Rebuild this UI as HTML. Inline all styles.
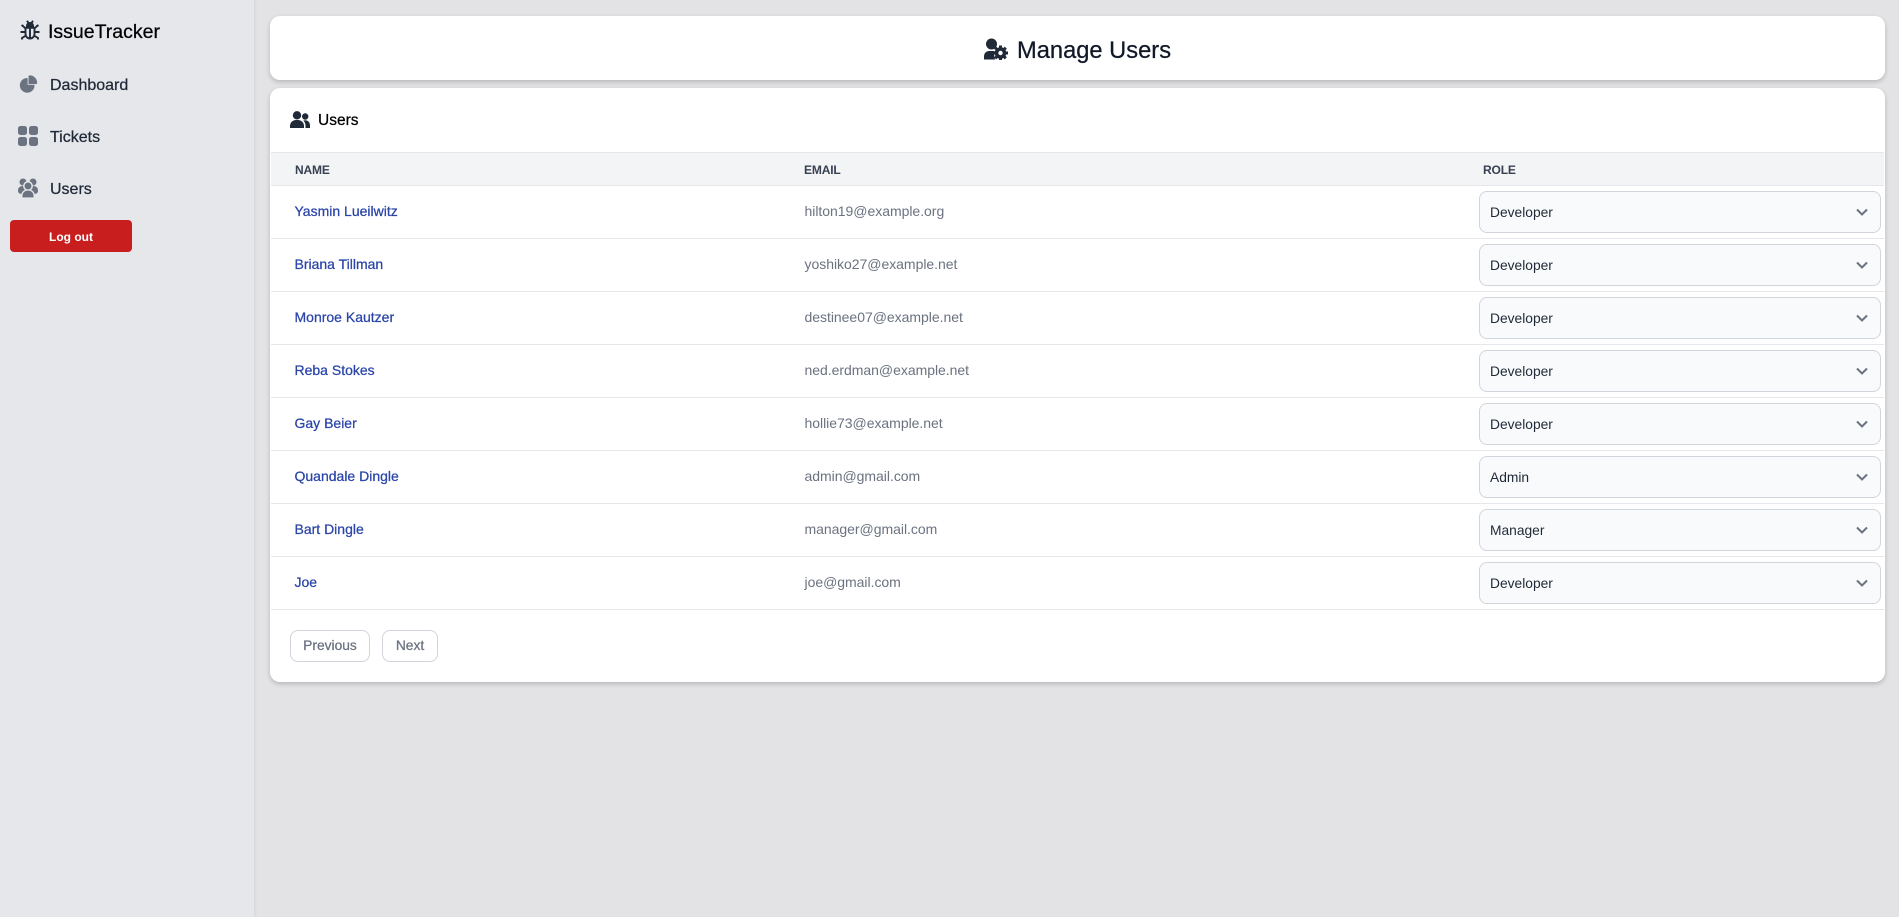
<!DOCTYPE html>
<html><head><meta charset="utf-8"><title>Manage Users</title>
<style>
*{box-sizing:border-box}
html,body{margin:0;padding:0;width:1899px;height:917px;overflow:hidden;background:#e3e3e5;font-family:"Liberation Sans",sans-serif;color:#111827}
.a{position:absolute}
.t{position:absolute;white-space:nowrap;line-height:20px}
#side{left:0;top:0;width:254px;height:917px;background:#e5e7eb;box-shadow:1px 0 3px rgba(0,0,0,.07)}
.card{position:absolute;left:270px;width:1615px;background:#fff;border-radius:10px;box-shadow:0 2px 5px rgba(0,0,0,.2)}
.line{position:absolute;left:271px;width:1613px;height:1px;background:#e5e7eb}
.sel{position:absolute;left:1479px;width:402px;height:42px;background:#f9fafb;border:1px solid #d1d5db;border-radius:8px}
.sel span{position:absolute;left:10px;top:11px;font-size:13.8px;line-height:20px;color:#1f2937}
.sel svg{position:absolute;right:12px;top:14px}
.n{left:294.500px;font-size:14px;color:#2a44a8;-webkit-text-stroke:.25px #2a44a8}
.e{left:804.500px;font-size:14px;letter-spacing:-.03px;color:#6b7280}
.h{font-size:12px;font-weight:700;color:#374151;top:160px;letter-spacing:-.15px}
.m{left:50px;font-size:16px;color:#1f2937;-webkit-text-stroke:.25px #1f2937}
.b{position:absolute;top:630px;height:32px;background:#fff;border:1px solid #d1d5db;border-radius:8px;font-size:13.800px;color:#6b7280;text-align:center;line-height:30px;-webkit-text-stroke:.25px #6b7280}
</style></head><body>
<div class="a" id="side"></div>
<svg class="a" style="left:20px;top:20px" width="20" height="20" viewBox="0 0 20 20" fill="none" stroke="#1f2937" stroke-width="1.9"><path fill="#1f2937" stroke="none" d="M6 6a4 4 0 0 1 8 0v1H6z"/><path d="M5.500 7.800h9v6.200a4.500 4.500 0 0 1-9 0zM10 7.500V18.500M7 .8l1.500 2.200M13 .8l-1.500 2.200M5.500 8.500 2.500 5.500 1.500 6M14.500 8.500 17.500 5.500 18.500 6M5.500 12H.5M14.500 12H19.500M6 15.500l-4 2.500v1.500M14 15.500l4 2.500v1.500"/></svg>
<div class="t" style="left:48px;top:21.500px;font-size:19.500px;color:#000;-webkit-text-stroke:.25px #000">IssueTracker</div>
<svg class="a" style="left:19px;top:75px" width="19" height="19" viewBox="0 0 22 21" fill="#6b7280"><path d="M16.975 11H10V4.025a1 1 0 0 0-1.066-.998 8.500 8.500 0 1 0 9.039 9.039.999.999 0 0 0-1-1.066h.002Z"/><path d="M12.500 0c-.157 0-.311.010-.565.027A1 1 0 0 0 11 1.020V10h8.975a1 1 0 0 0 1-.935c.013-.188.028-.374.028-.565A8.510 8.510 0 0 0 12.500 0Z"/></svg>
<div class="t m" style="top:76px">Dashboard</div>
<svg class="a" style="left:18px;top:126px" width="20" height="20" viewBox="0 0 20 20" fill="#6b7280"><rect width="9" height="9" rx="2.500"/><rect x="11" width="9" height="9" rx="2.500"/><rect y="11" width="9" height="9" rx="2.500"/><rect x="11" y="11" width="9" height="9" rx="2.500"/></svg>
<div class="t m" style="top:128px">Tickets</div>
<svg class="a" style="left:18px;top:178px" width="20" height="20" viewBox="0 0 20 20" fill="#6b7280"><circle cx="5" cy="4" r="3.500"/><circle cx="15" cy="4" r="3.500"/><path d="M0 12.500C0 9.500 2 8 5 8h10c3 0 5 1.500 5 4.500 0 2-1 3-3 3.500H3c-2 -.5-3-1.500-3-3.500z"/><circle cx="10" cy="8" r="4.200" stroke="#e5e7eb" stroke-width="1.500"/><path d="M3.800 20v-2.500c0-3 2.500-5.500 5.500-5.500h1.400c3 0 5.500 2.500 5.500 5.500V20z" stroke="#e5e7eb" stroke-width="1.300"/></svg>
<div class="t m" style="top:180px">Users</div>
<div class="a" style="left:10px;top:220px;width:122px;height:32px;background:#c81e1e;border-radius:4px;color:#fff;font-size:12px;font-weight:700;text-align:center;line-height:34px">Log out</div>

<div class="card" style="top:16px;height:64px"></div>
<svg class="a" style="left:984px;top:38px" width="25" height="22" viewBox="0 0 25 22" fill="#1f2937"><circle cx="7.500" cy="6" r="5.500"/><path d="M0 21.500v-3.500a5 5 0 0 1 5-5h5.500c-.5 2.500-.5 6 .8 8.500z"/><g transform="translate(16.500 15)"><circle r="4.300" fill="none" stroke="#1f2937" stroke-width="3"/><g><rect x="-1.500" y="-7.500" width="3" height="15"/><rect x="-1.500" y="-7.500" width="3" height="15" transform="rotate(45)"/><rect x="-1.500" y="-7.500" width="3" height="15" transform="rotate(90)"/><rect x="-1.500" y="-7.500" width="3" height="15" transform="rotate(135)"/></g><circle r="2.200" fill="#fff"/></g></svg>
<div class="t" style="left:1017px;top:37px;font-size:23.700px;line-height:28px;color:#111827;-webkit-text-stroke:.25px #111827">Manage Users</div>

<div class="card" style="top:88px;height:594px"></div>
<svg class="a" style="left:290px;top:111px" width="20" height="17" viewBox="0 0 20 17" fill="#1f2937"><circle cx="7" cy="4.300" r="4.200"/><path d="M0 17v-2a6 6 0 0 1 6-6h2a6 6 0 0 1 6 6v2z"/><circle cx="15.200" cy="5.500" r="3.200"/><path d="M15.500 17v-2.500c0-2-.8-3.700-2.200-4.900.6-.3 1.200-.4 1.900-.4 2.700 0 4.800 2.200 4.800 4.800V17z"/></svg>
<div class="t" style="left:318px;top:111px;font-size:15.500px;color:#000;-webkit-text-stroke:.25px #000">Users</div>

<div class="a" style="left:271px;top:152px;width:1613px;height:34px;background:#f3f4f6;border-top:1px solid #e5e7eb;border-bottom:1px solid #e5e7eb"></div>
<div class="t h" style="left:295px">NAME</div>
<div class="t h" style="left:804px">EMAIL</div>
<div class="t h" style="left:1483px">ROLE</div>

<div class="t n" style="top:201px">Yasmin Lueilwitz</div><div class="t e" style="top:201px">hilton19@example.org</div>
<div class="sel" style="top:191px"><span>Developer</span><svg width="12" height="12" viewBox="0 0 12 12" fill="none" stroke="#6b7280" stroke-width="2"><path d="M1 3.500l5 5 5-5"/></svg></div>
<div class="line" style="top:238px"></div>

<div class="t n" style="top:254px">Briana Tillman</div><div class="t e" style="top:254px">yoshiko27@example.net</div>
<div class="sel" style="top:244px"><span>Developer</span><svg width="12" height="12" viewBox="0 0 12 12" fill="none" stroke="#6b7280" stroke-width="2"><path d="M1 3.500l5 5 5-5"/></svg></div>
<div class="line" style="top:291px"></div>

<div class="t n" style="top:307px">Monroe Kautzer</div><div class="t e" style="top:307px">destinee07@example.net</div>
<div class="sel" style="top:297px"><span>Developer</span><svg width="12" height="12" viewBox="0 0 12 12" fill="none" stroke="#6b7280" stroke-width="2"><path d="M1 3.500l5 5 5-5"/></svg></div>
<div class="line" style="top:344px"></div>

<div class="t n" style="top:360px">Reba Stokes</div><div class="t e" style="top:360px">ned.erdman@example.net</div>
<div class="sel" style="top:350px"><span>Developer</span><svg width="12" height="12" viewBox="0 0 12 12" fill="none" stroke="#6b7280" stroke-width="2"><path d="M1 3.500l5 5 5-5"/></svg></div>
<div class="line" style="top:397px"></div>

<div class="t n" style="top:413px">Gay Beier</div><div class="t e" style="top:413px">hollie73@example.net</div>
<div class="sel" style="top:403px"><span>Developer</span><svg width="12" height="12" viewBox="0 0 12 12" fill="none" stroke="#6b7280" stroke-width="2"><path d="M1 3.500l5 5 5-5"/></svg></div>
<div class="line" style="top:450px"></div>

<div class="t n" style="top:466px">Quandale Dingle</div><div class="t e" style="top:466px">admin@gmail.com</div>
<div class="sel" style="top:456px"><span>Admin</span><svg width="12" height="12" viewBox="0 0 12 12" fill="none" stroke="#6b7280" stroke-width="2"><path d="M1 3.500l5 5 5-5"/></svg></div>
<div class="line" style="top:503px"></div>

<div class="t n" style="top:519px">Bart Dingle</div><div class="t e" style="top:519px">manager@gmail.com</div>
<div class="sel" style="top:509px"><span>Manager</span><svg width="12" height="12" viewBox="0 0 12 12" fill="none" stroke="#6b7280" stroke-width="2"><path d="M1 3.500l5 5 5-5"/></svg></div>
<div class="line" style="top:556px"></div>

<div class="t n" style="top:572px">Joe</div><div class="t e" style="top:572px">joe@gmail.com</div>
<div class="sel" style="top:562px"><span>Developer</span><svg width="12" height="12" viewBox="0 0 12 12" fill="none" stroke="#6b7280" stroke-width="2"><path d="M1 3.500l5 5 5-5"/></svg></div>
<div class="line" style="top:609px"></div>

<div class="b" style="left:290px;width:80px">Previous</div>
<div class="b" style="left:382px;width:56px">Next</div>
</body></html>
